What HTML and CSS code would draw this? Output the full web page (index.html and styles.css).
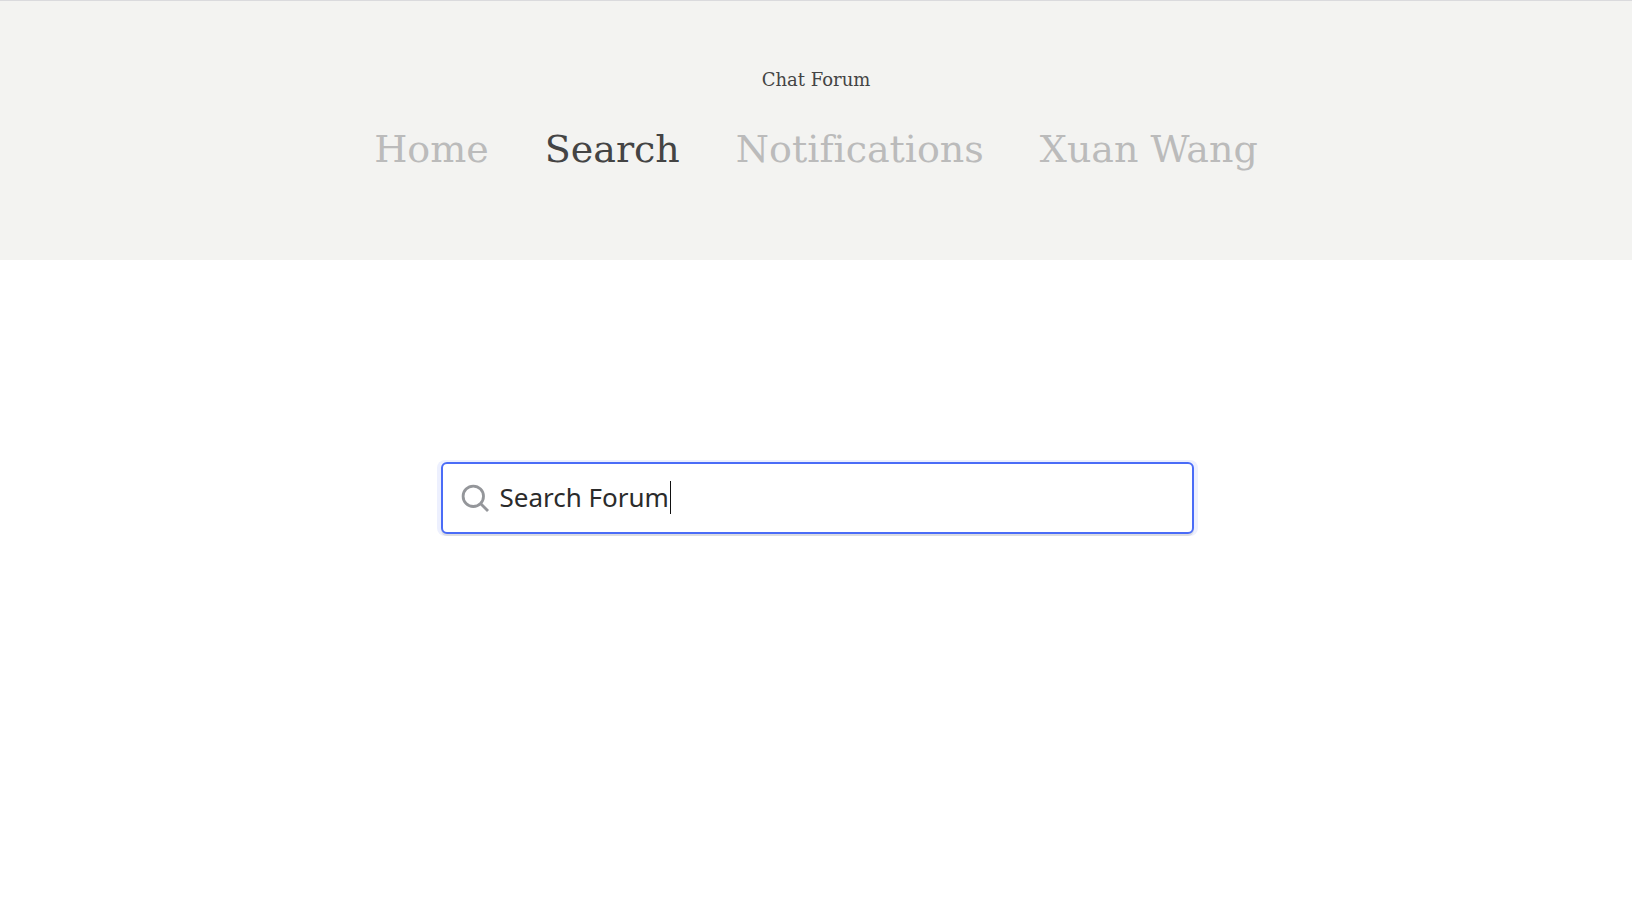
FILE: index.html
```html
<!DOCTYPE html>
<html lang="en">
<head>
<meta charset="utf-8">
<meta name="viewport" content="width=device-width, initial-scale=1">
<title>Chat Forum</title>
<link rel="stylesheet" href="styles.css">
</head>
<body>
<header class="site-header">
  <h1 class="site-title">Chat Forum</h1>
  <nav class="site-nav">
    <a class="nav-link" href="#home">Home</a>
    <a class="nav-link nav-link-active" href="#search" aria-current="page">Search</a>
    <a class="nav-link" href="#notifications">Notifications</a>
    <a class="nav-link" href="#profile">Xuan Wang</a>
  </nav>
</header>
<main class="content">
  <label class="search-box">
    <svg class="search-icon" viewBox="0 0 28 28" fill="none" stroke="#94969a" stroke-width="2.8" aria-hidden="true">
      <circle cx="12.3" cy="12.3" r="10.2"/>
      <path d="M19.5 19.5 27 27"/>
    </svg>
    <span class="search-field">
      <input class="search-input" type="text" value="Search Forum" aria-label="Search Forum">
      <span class="search-caret"></span>
    </span>
  </label>
</main>
</body>
</html>
```

FILE: styles.css
```css
* {
  box-sizing: border-box;
}

body {
  margin: 0;
  background: #fff;
}

.site-header {
  display: flex;
  flex-direction: column;
  align-items: center;
  gap: 32px;
  padding: 67px 24px 85px;
  border-top: 1px solid #dadadd;
  background: #f3f3f1;
  font-family: "DejaVu Serif", serif;
  font-variant-ligatures: none;
}

.site-title {
  margin: 0;
  color: #444;
  font-size: 18px;
  font-weight: 400;
  line-height: 24px;
}

.site-nav {
  display: flex;
  flex-wrap: wrap;
  justify-content: center;
  column-gap: 56px;
}

.nav-link {
  color: #bbb;
  font-size: 38px;
  line-height: 51px;
  text-decoration: none;
}

.nav-link-active {
  color: #444;
}

.content {
  display: flex;
  justify-content: center;
  padding: 202px 24px 24px 26px;
}

.search-box {
  display: flex;
  align-items: center;
  gap: 11px;
  width: 100%;
  max-width: 753px;
  height: 72px;
  padding: 0 18px;
  border: 2px solid #4a6cf7;
  border-radius: 6px;
  background: #fff;
  box-shadow: 0 2px 0 #dcdde2, -2px 0 0 2px #edf0fe, 2px 0 0 2px #edf0fe;
  cursor: text;
}

.search-icon {
  flex: none;
  width: 28px;
  height: 28px;
}

.search-field {
  display: flex;
  align-items: center;
  gap: 1px;
  padding-bottom: 2px;
}

.search-input {
  field-sizing: content;
  min-width: 1px;
  padding: 0;
  border: 0;
  outline: 0;
  background: transparent;
  color: #2b2b2b;
  font-family: "Noto Sans", sans-serif;
  font-size: 26px;
  line-height: 36px;
}

.search-caret {
  width: 1px;
  height: 33px;
  background: #111;
}
```
